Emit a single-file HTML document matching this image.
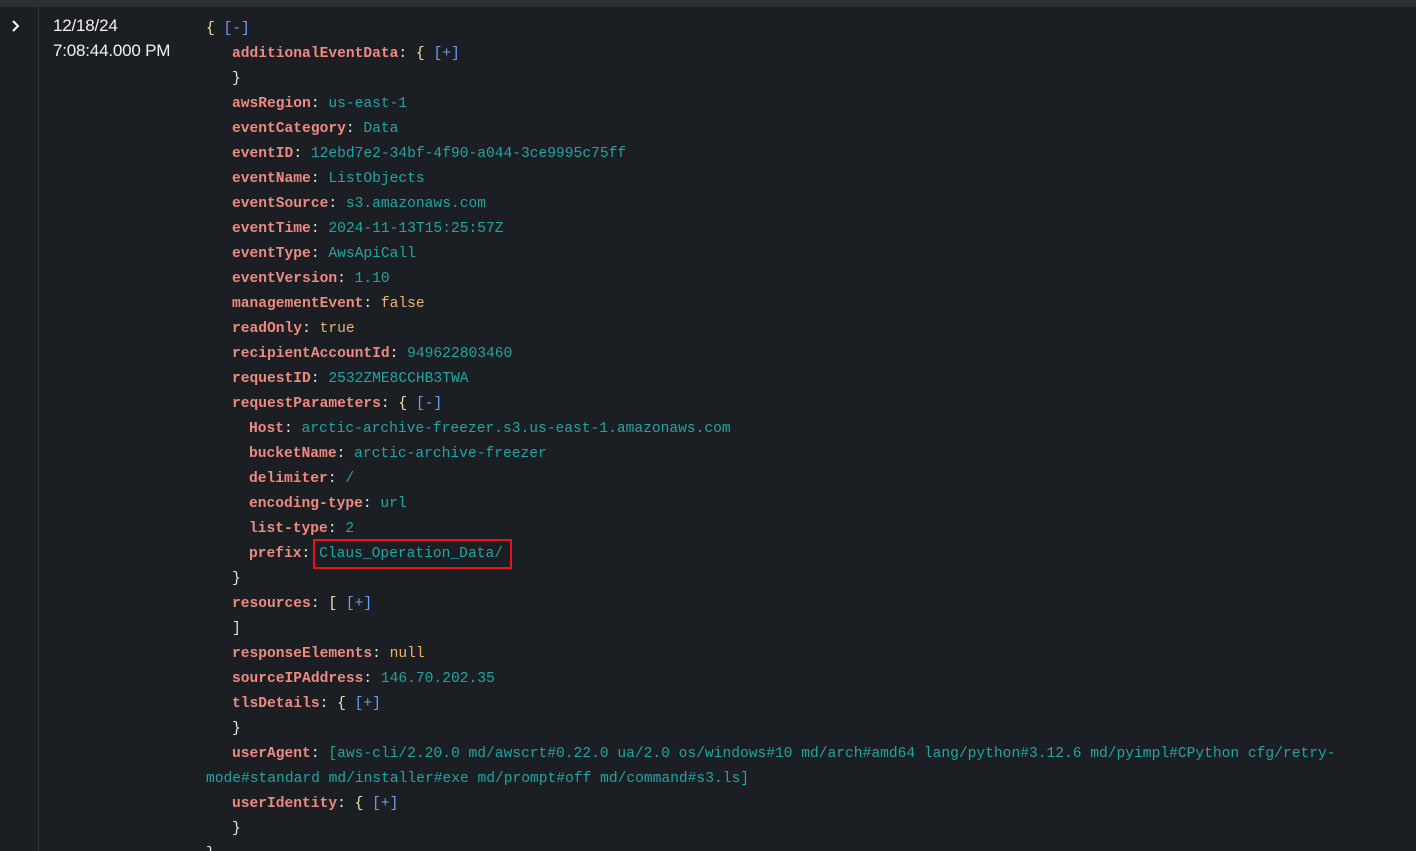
<!DOCTYPE html>
<html><head><meta charset="utf-8"><style>
html,body{margin:0;padding:0;overflow:hidden;width:1416px;height:851px;}
body{background:#1b1e23;position:relative;font-family:"Liberation Sans",sans-serif;}
.top{position:absolute;left:0;top:0;width:1416px;height:7px;background:#2b2e33;}
.vl{position:absolute;left:38px;top:7px;width:1px;height:844px;background:#30353c;}
.date{position:absolute;left:53px;color:#f2f2f2;font-size:17px;letter-spacing:-0.2px;}
.l{position:absolute;height:25px;line-height:25px;font-family:"Liberation Mono",monospace;font-size:14.6px;white-space:pre;color:#e6e6e6;}
.k{color:#ee8b80;font-weight:bold;}
.v{color:#1ea6a2;}
.b{color:#f0b46a;}
.br{color:#6f9ff0;}
.p{color:#f5e6b0;}
.box{position:absolute;left:313px;top:539px;width:195px;height:26px;border:2px solid #e8141c;}
</style></head><body>
<div class="top"></div>
<div class="vl"></div>
<svg style="position:absolute;left:10px;top:19px" width="12" height="14" viewBox="0 0 12 14"><path d="M3 2 L8 7 L3 12" fill="none" stroke="#fff" stroke-width="2"/></svg>
<div class="date" style="top:16px">12/18/24</div>
<div class="date" style="top:41px">7:08:44.000 PM</div>

<div class="l" style="left:206px;top:17px"><span class="p">{</span> <span class="br">[-]</span></div>
<div class="l" style="left:232px;top:42px"><span class="k">additionalEventData</span>: <span class="p">{</span> <span class="br">[+]</span></div>
<div class="l" style="left:232px;top:67px">}</div>
<div class="l" style="left:232px;top:92px"><span class="k">awsRegion</span>: <span class="v">us-east-1</span></div>
<div class="l" style="left:232px;top:117px"><span class="k">eventCategory</span>: <span class="v">Data</span></div>
<div class="l" style="left:232px;top:142px"><span class="k">eventID</span>: <span class="v">12ebd7e2-34bf-4f90-a044-3ce9995c75ff</span></div>
<div class="l" style="left:232px;top:167px"><span class="k">eventName</span>: <span class="v">ListObjects</span></div>
<div class="l" style="left:232px;top:192px"><span class="k">eventSource</span>: <span class="v">s3.amazonaws.com</span></div>
<div class="l" style="left:232px;top:217px"><span class="k">eventTime</span>: <span class="v">2024-11-13T15:25:57Z</span></div>
<div class="l" style="left:232px;top:242px"><span class="k">eventType</span>: <span class="v">AwsApiCall</span></div>
<div class="l" style="left:232px;top:267px"><span class="k">eventVersion</span>: <span class="v">1.10</span></div>
<div class="l" style="left:232px;top:292px"><span class="k">managementEvent</span>: <span class="b">false</span></div>
<div class="l" style="left:232px;top:317px"><span class="k">readOnly</span>: <span class="b">true</span></div>
<div class="l" style="left:232px;top:342px"><span class="k">recipientAccountId</span>: <span class="v">949622803460</span></div>
<div class="l" style="left:232px;top:367px"><span class="k">requestID</span>: <span class="v">2532ZME8CCHB3TWA</span></div>
<div class="l" style="left:232px;top:392px"><span class="k">requestParameters</span>: <span class="p">{</span> <span class="br">[-]</span></div>
<div class="l" style="left:249px;top:417px"><span class="k">Host</span>: <span class="v">arctic-archive-freezer.s3.us-east-1.amazonaws.com</span></div>
<div class="l" style="left:249px;top:442px"><span class="k">bucketName</span>: <span class="v">arctic-archive-freezer</span></div>
<div class="l" style="left:249px;top:467px"><span class="k">delimiter</span>: <span class="v">/</span></div>
<div class="l" style="left:249px;top:492px"><span class="k">encoding-type</span>: <span class="v">url</span></div>
<div class="l" style="left:249px;top:517px"><span class="k">list-type</span>: <span class="v">2</span></div>
<div class="l" style="left:249px;top:542px"><span class="k">prefix</span>: <span class="v">Claus_Operation_Data/</span></div>
<div class="box"></div>
<div class="l" style="left:232px;top:567px">}</div>
<div class="l" style="left:232px;top:592px"><span class="k">resources</span>: <span class="p">[</span> <span class="br">[+]</span></div>
<div class="l" style="left:232px;top:617px">]</div>
<div class="l" style="left:232px;top:642px"><span class="k">responseElements</span>: <span class="b">null</span></div>
<div class="l" style="left:232px;top:667px"><span class="k">sourceIPAddress</span>: <span class="v">146.70.202.35</span></div>
<div class="l" style="left:232px;top:692px"><span class="k">tlsDetails</span>: <span class="p">{</span> <span class="br">[+]</span></div>
<div class="l" style="left:232px;top:717px">}</div>
<div class="l" style="left:232px;top:742px"><span class="k">userAgent</span>: <span class="v">[aws-cli/2.20.0 md/awscrt#0.22.0 ua/2.0 os/windows#10 md/arch#amd64 lang/python#3.12.6 md/pyimpl#CPython cfg/retry-</span></div>
<div class="l" style="left:206px;top:767px"><span class="v">mode#standard md/installer#exe md/prompt#off md/command#s3.ls]</span></div>
<div class="l" style="left:232px;top:792px"><span class="k">userIdentity</span>: <span class="p">{</span> <span class="br">[+]</span></div>
<div class="l" style="left:232px;top:817px">}</div>
<div class="l" style="left:206px;top:826px;height:25px;overflow:hidden"><span style="position:relative;top:16px">}</span></div>
</body></html>
